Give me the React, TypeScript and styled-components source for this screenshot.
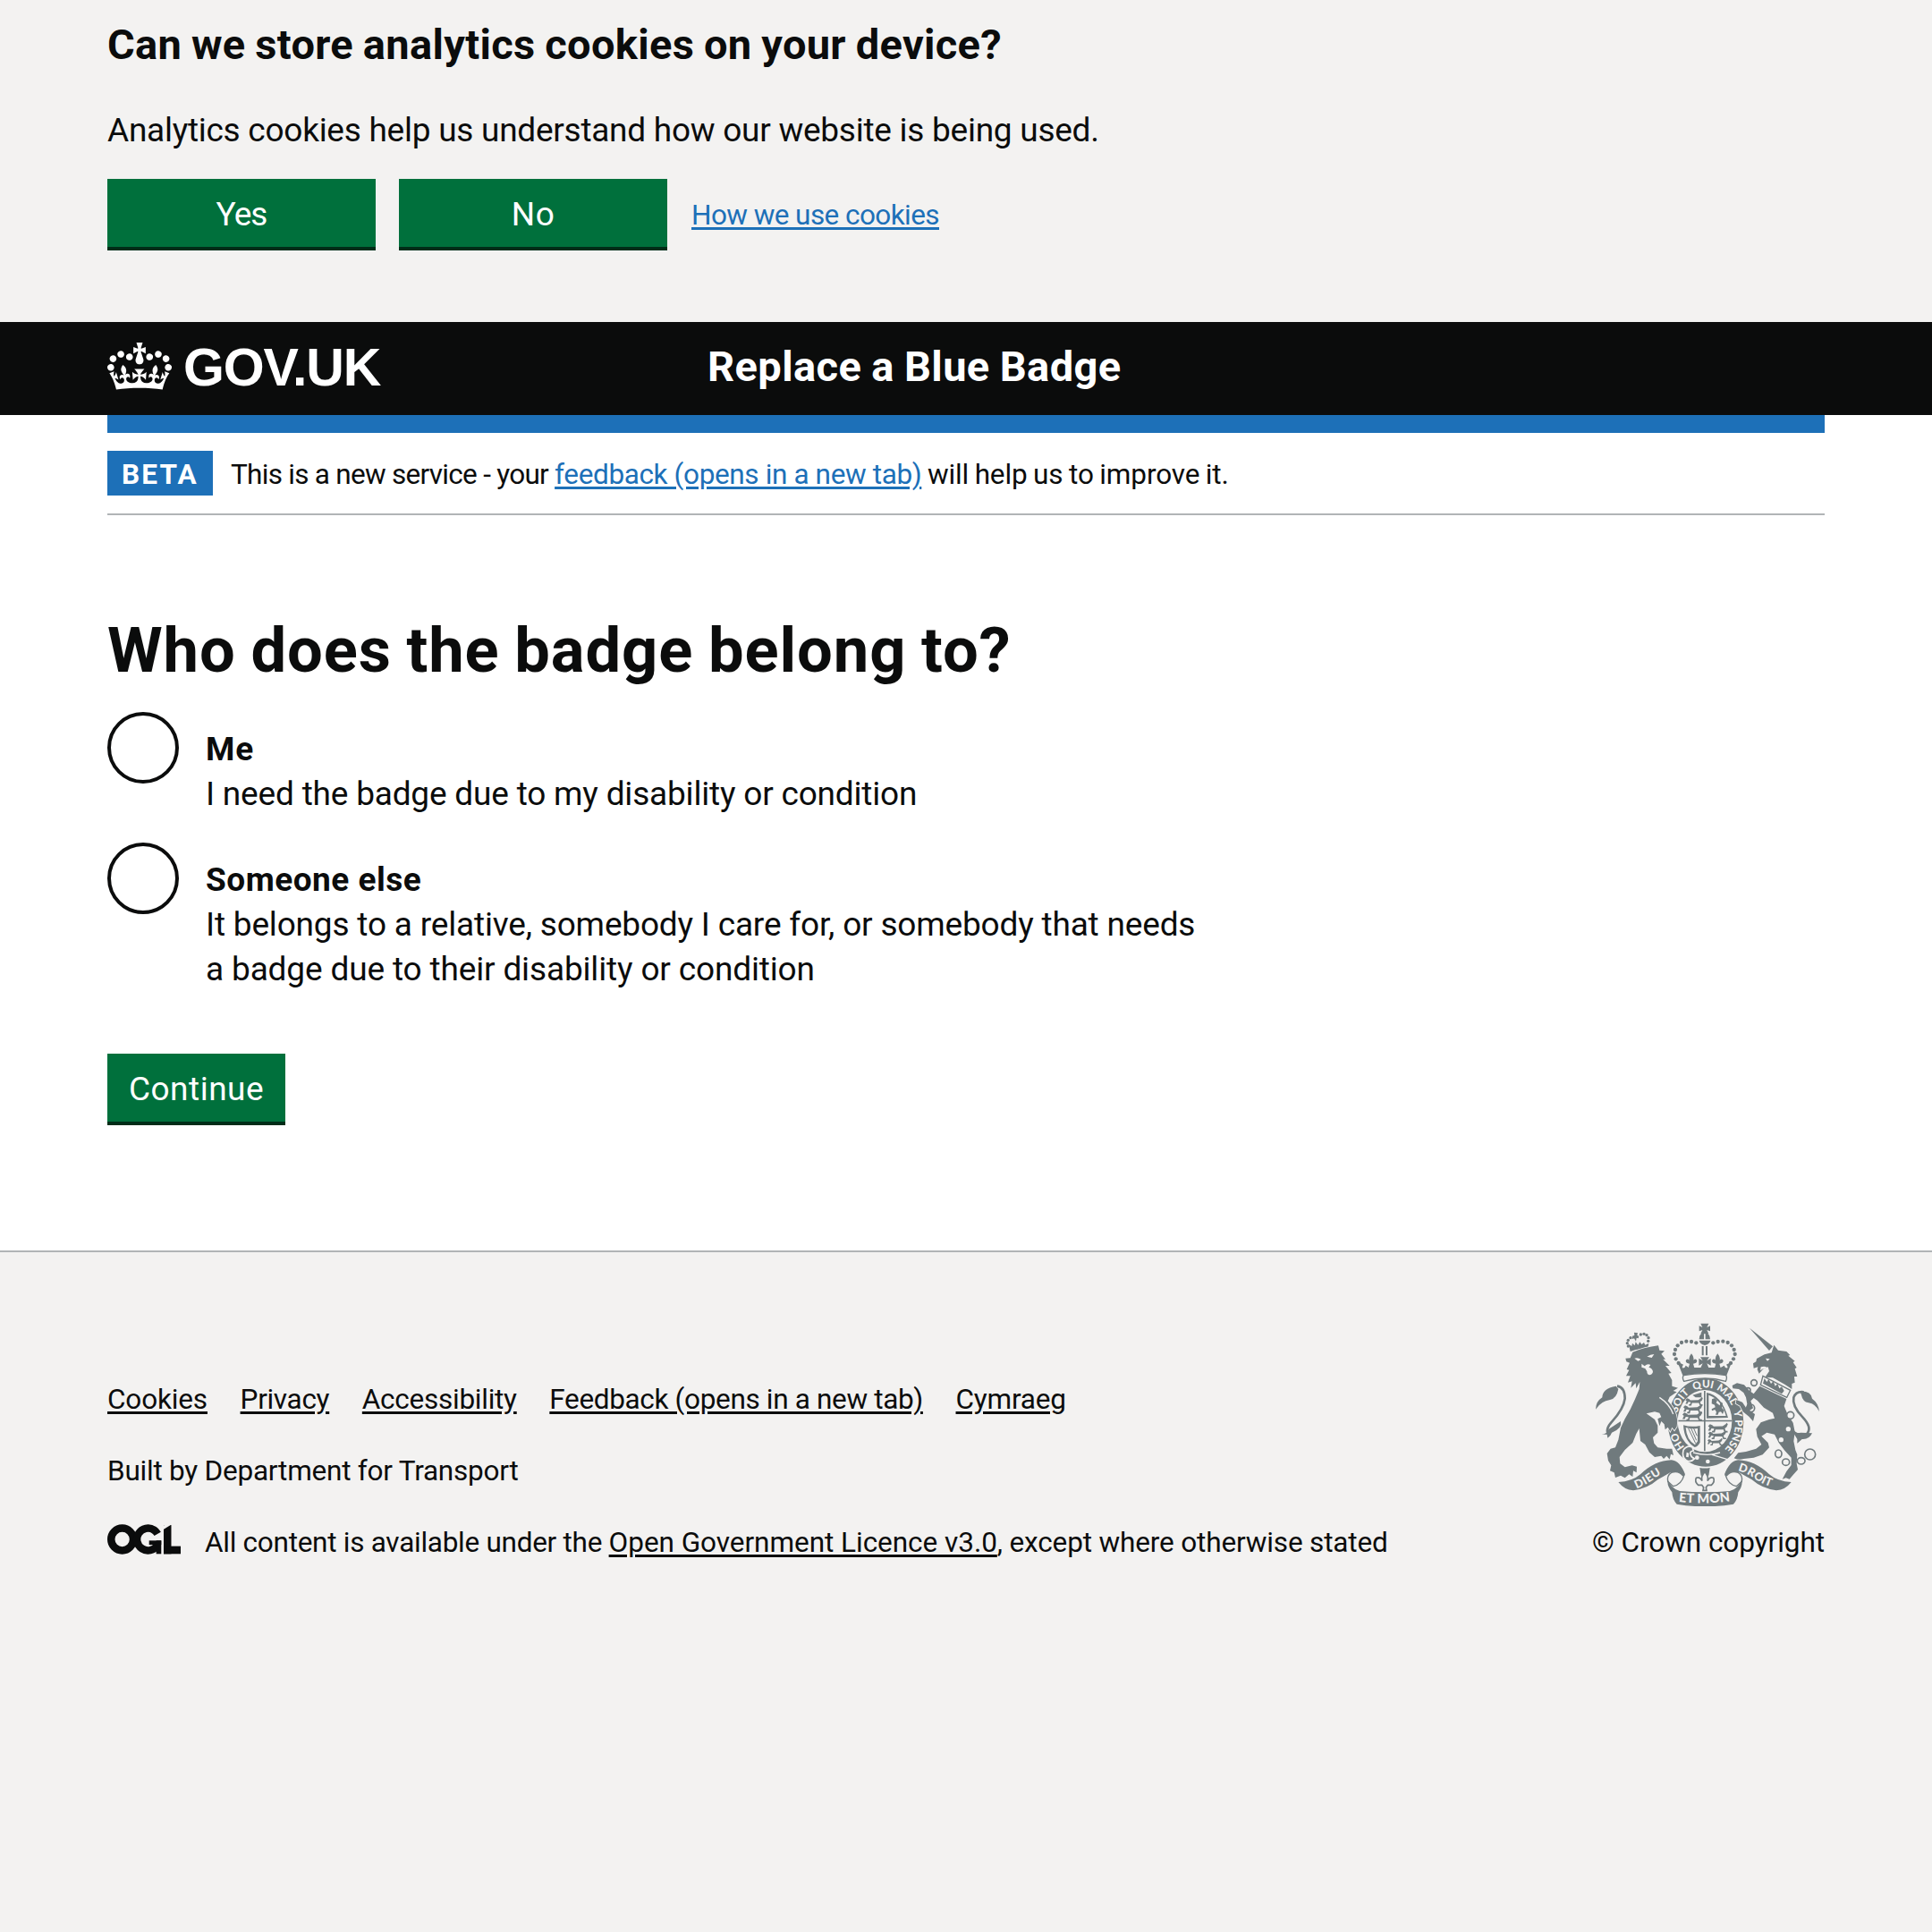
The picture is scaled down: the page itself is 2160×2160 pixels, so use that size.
import React from "react";
import styled, { createGlobalStyle } from "styled-components";

const ink = "#0b0c0c";
const blue = "#1d70b8";
const green = "#00703c";
const greenShadow = "#002d18";
const paleGrey = "#f3f2f1";
const ruleGrey = "#b1b4b6";
const crest = "#707a7d";

const GlobalStyle = createGlobalStyle`
  html { background: ${paleGrey}; }
  body {
    margin: 0;
    background: ${paleGrey};
    color: ${ink};
    font-family: Roboto, "Noto Sans", sans-serif;
    -webkit-font-smoothing: antialiased;
  }
`;

const Page = styled.div`
  display: flex;
  flex-direction: column;
  min-height: 2160px;
`;

const Container = styled.div`
  width: 1920px;
  margin: 0 auto;
`;

const Tracked = styled.span<{ $ls: number; $ws?: number }>`
  letter-spacing: ${(p) => p.$ls}px;
  word-spacing: ${(p) => p.$ws ?? 0}px;
  white-space: pre;
`;

/* Cookie banner */
const CookieBanner = styled.section`
  box-sizing: border-box;
  height: 360px;
  padding-top: 20px;
  background: ${paleGrey};
`;

const CookieHeading = styled.h2`
  margin: 0 0 41px;
  font-size: 47px;
  line-height: 60px;
  font-weight: 700;
  letter-spacing: 0.32px;
  word-spacing: -1.2px;
`;

const CookieText = styled.p`
  margin: 0 0 29px;
  font-size: 37px;
  line-height: 50px;
  letter-spacing: -0.26px;
`;

const ButtonRow = styled.div`
  display: flex;
  align-items: center;
`;

const Button = styled.button<{ $width: number; $ls: number }>`
  box-sizing: border-box;
  display: block;
  width: ${(p) => p.$width}px;
  height: 76px;
  margin: 0 26px 4px 0;
  padding: 15px 0 11px;
  border: 0;
  background: ${green};
  box-shadow: 0 4px 0 ${greenShadow};
  color: #fff;
  font-family: inherit;
  font-size: 37px;
  line-height: 50px;
  letter-spacing: ${(p) => p.$ls}px;
  text-align: center;
`;

const Link = styled.a<{ $ls: number; $dark?: boolean }>`
  color: ${(p) => (p.$dark ? ink : blue)};
  font-size: 31.5px;
  letter-spacing: ${(p) => p.$ls}px;
  white-space: pre;
  text-decoration: underline;
  text-decoration-thickness: 3px;
  text-underline-offset: 3px;
`;

const CookieLink = styled(Link)`
  margin-left: 1px;
  padding-top: 2px;
  line-height: 40px;
`;

/* Header */
const Header = styled.header`
  background: ${ink};
  color: #fff;
`;

const HeaderInner = styled(Container)`
  display: flex;
  align-items: flex-start;
  height: 104px;
`;

const Logo = styled.a`
  display: flex;
  align-items: flex-start;
  width: 671px;
  color: #fff;
`;

const Crown = styled.svg`
  width: 72px;
  height: 53px;
  margin: 23px 13px 0 0;
  fill: #fff;
`;

const LogoText = styled.span`
  padding-top: 21px;
  font-family: "Liberation Sans", Arial, sans-serif;
  font-size: 59px;
  line-height: 60px;
  font-weight: 700;
  letter-spacing: -1.2px;
`;

const ServiceName = styled.span`
  padding-top: 25px;
  font-size: 47px;
  line-height: 50px;
  font-weight: 700;
  letter-spacing: 0.4px;
  word-spacing: -1px;
`;

/* Phase banner and question */
const Content = styled.div`
  box-sizing: border-box;
  height: 934px;
  background: #fff;
`;

const BlueBar = styled.div`
  height: 20px;
  background: ${blue};
`;

const PhaseBanner = styled.div`
  display: flex;
  align-items: flex-start;
  height: 50px;
  padding: 20px 0;
  border-bottom: 2px solid ${ruleGrey};
`;

const PhaseTag = styled.strong`
  box-sizing: border-box;
  width: 118px;
  height: 50px;
  margin-right: 20px;
  padding: 2px 0 0 16px;
  background: ${blue};
  color: #fff;
  font-size: 31.5px;
  line-height: 49px;
  letter-spacing: 2.2px;
`;

const PhaseText = styled.span`
  padding-top: 2px;
  font-size: 31.5px;
  line-height: 49px;
`;

const Question = styled.h1`
  margin: 113px 0 31px;
  font-size: 70.5px;
  line-height: 76px;
  font-weight: 700;
  letter-spacing: 0.9px;
  word-spacing: -1.7px;
`;

const Radios = styled.div`
  display: flex;
  flex-direction: column;
  gap: 29px;
  margin-bottom: 69px;
`;

const RadioItem = styled.label`
  display: flex;
  align-items: flex-start;
`;

const RadioCircle = styled.span`
  box-sizing: border-box;
  width: 80px;
  height: 80px;
  margin-right: 30px;
  border: 4px solid ${ink};
  border-radius: 50%;
  background: #fff;
`;

const RadioText = styled.span`
  display: flex;
  flex-direction: column;
  padding-top: 17px;
  font-size: 37px;
  line-height: 50px;
`;

const RadioTitle = styled.strong<{ $ls: number }>`
  letter-spacing: ${(p) => p.$ls}px;
`;

/* Footer */
const Footer = styled.footer`
  flex: 1;
  border-top: 2px solid ${ruleGrey};
  background: ${paleGrey};
`;

const FooterInner = styled(Container)`
  display: flex;
  justify-content: space-between;
  padding-top: 79px;
`;

const FooterMain = styled.div`
  display: flex;
  flex-direction: column;
  gap: 30px;
  padding-top: 61px;
  font-size: 31.5px;
  line-height: 50px;
`;

const FooterLinks = styled.nav`
  display: flex;
  gap: 36.6px;
`;

const LicenceRow = styled.div`
  display: flex;
  align-items: flex-start;
`;

const OglMark = styled.svg`
  width: 82px;
  height: 34px;
  margin: 4px 27px 0 0;
`;

const FooterSide = styled.div`
  width: 260px;
  font-size: 31.5px;
  line-height: 50px;
  white-space: nowrap;
`;

const Arms = styled.svg`
  display: block;
  width: 260px;
  height: 205px;
  margin-bottom: 16px;
`;

function OglLogo() {
  return (
    <OglMark viewBox="0 0 483 196" aria-hidden="true">
      <g fill="none" stroke={ink} strokeWidth="50">
        <circle cx="98" cy="98" r="73" />
        <circle cx="268" cy="98" r="73" strokeDasharray="376 83" transform="rotate(33 268 98)" />
      </g>
      <g fill={ink}>
        <rect x="275" y="106" width="80" height="28" />
        <rect x="322" y="106" width="33" height="88" />
        <rect x="371" y="4" width="50" height="190" />
        <rect x="371" y="143" width="112" height="51" />
      </g>
      <line x1="361" y1="26" x2="421" y2="-12" stroke={paleGrey} strokeWidth="22" />
    </OglMark>
  );
}

const crownBeads = [
  [379, 95], [363, 91], [346, 90], [330, 94], [317, 104], [309, 118], [306, 133], [311, 149], [320, 163],
];

const coronetBeads = [
  [151, 106], [148, 96], [151, 86], [159, 78], [193, 67], [204, 65], [213, 69], [219, 78], [218, 89],
];

const chainRings: [number, number, number, number][] = [
  [573, 229, 10, 10], [553, 254, 8, 8], [562, 314, 13, 13], [695, 338, 12, 12],
  [655, 467, 11, 13], [680, 495, 12, 11], [731, 491, 13, 11], [761, 469, 18, 18],
];

const motto: [string, string][] = [
  ["HO", "16%"], ["SOIT", "35.6%"], ["QUI", "48.8%"], ["MAL", "60.8%"], ["Y", "71%"], ["PENSE", "81.6%"],
];

function Lioncel({ x, y, s = 1 }: { x: number; y: number; s?: number }) {
  return (
    <path
      transform={`translate(${x} ${y}) scale(${s})`}
      d="M0 5l5-5 6 2 4 4 24-1 8-5 3-4 3 4-3 7-5 4 2 7h5l1 4h-9l-3-8H20l-2 8h-8l1-4 4-1 1-5-7-1-3 6H0l4-8z"
    />
  );
}

function RoyalArms() {
  return (
    <Arms viewBox="30 28 780 615" fill={crest} aria-hidden="true">
      <defs>
        <path id="garter" d="M411 479A99 117 0 0 1 411 245A99 117 0 0 1 411 479" />
        <path id="scrollLeft" d="M179 584Q222 566 248 544Q268 531 300 521" />
        <path id="scrollMid" d="M320 628Q408 638 502 625" />
        <path id="scrollRight" d="M519 524Q552 532 578 552Q604 572 652 584" />
      </defs>

      {/* imperial crown */}
      <path d="M394 30h27l-6 13 11-5v18l-11-4 6 13h-27l6-13-11 4V38l11 5z" />
      <path d="M389 83q0-20 16-22v22zM410 61q15 2 16 22h-16zM389 87h38q-2 12-19 16-17-4-19-16z" />
      {crownBeads.map(([x, y]) => (
        <g key={x}>
          <circle cx={x} cy={y} r="6.4" />
          <circle cx={815 - x} cy={y} r="6.4" />
        </g>
      ))}
      <path d="M398 106h6v31h-6zm13 0h6v31h-6z" />
      <path d="M393 143h30l-8 12 13-8v24l-13-7 6 15h-27l7-15-13 7v-24l13 8z" />
      <path d="M363 131q10 12 7 22 8-8 12 2-1 10-13 10l4 14h-20l4-14q-12 0-13-10 4-10 12-2-3-10 7-22zm88 0q10 12 7 22 8-8 12 2-1 10-13 10l4 14h-20l4-14q-12 0-13-10 4-10 12-2-3-10 7-22z" />
      <path d="M316 158l20 10q-5 6-3 11 8 2 11-8l10 7h107l12-7q3 10 11 8 2-5-4-11l19-10-18 46q-74-13-147 0z" />
      <path d="M337 204q71-12 142 0 5 8-1 20-69-20-140 0-7-12-1-20z" fill={paleGrey} stroke={crest} strokeWidth="4" />

      {/* garter and quartered shield */}
      <ellipse cx="411" cy="362" rx="127" ry="148" />
      <ellipse cx="408" cy="357" rx="91" ry="104" fill={paleGrey} />
      <g>
        <path d="M405 256h5v202h-5zM319 354h180v5H319z" />
        <Lioncel x={343} y={281} s={1.1} />
        <Lioncel x={336} y={305} s={1.2} />
        <Lioncel x={333} y={329} s={1.25} />
        <Lioncel x={419} y={368} s={1.25} />
        <Lioncel x={419} y={393} s={1.15} />
        <Lioncel x={417} y={418} s={0.95} />
        <path d="M367 270l30-9v17h-20z" />
        <path d="M414 262q50 8 72 84l-72 2zM421 270v70h58q-15-55-58-70z" fillRule="evenodd" />
        <path d="M432 284l10-4 8 8-4 8 12 9 3-12 7 4-3 16 8 8-5 13-6-8-7 1-3 9h-8l3-9-5-8-10 4-1-6 12-6-2-8-10-4z" />
        <path d="M336 371q25 8 56 2v56q-8 14-18 16-35-20-38-74zm8 8q3 42 31 58l9-12v-43q-22 3-40-3z" fillRule="evenodd" />
        <path d="M353 382l24 50M362 382l18 40M371 382l11 25" fill="none" stroke={crest} strokeWidth="3" />
      </g>
      <g fill={paleGrey} fontFamily="Lato, sans-serif" fontSize="35" fontWeight="900" textAnchor="middle">
        {motto.map(([word, offset]) => (
          <text key={word}>
            <textPath href="#garter" startOffset={offset}>{word}</textPath>
          </text>
        ))}
      </g>
      <path d="M336 455q12-18 30-10l4 12q-14 2-10 12 2 10 14 14-12 14-28 6-16-10-10-34z" stroke={paleGrey} strokeWidth="5" />
      <path d="M347 462l8 3-2 14-8-2z" fill={paleGrey} />
      <circle cx="382" cy="480" r="7" fill={paleGrey} />
      <circle cx="418" cy="493" r="7" fill={paleGrey} />
      <path d="M369 463q50 14 90 0M432 470l52 16" fill="none" stroke={paleGrey} strokeWidth="4" />

      {/* lion supporter */}
      <g>
        <path d="M158 124l-5-24 10 6 2-10 8 8 3-12 8 10 6-10 6 8 8-6 4 8 12-6-4 22q-30-6-58 6z" />
        <path d="M171 60l12 2-2 8 6 2-2 8-6-2-2 12-6-10-6 2v-10l7-2z" />
        {coronetBeads.map(([x, y]) => (
          <circle key={`${x}-${y}`} cx={x} cy={y} r="5" />
        ))}
        <path
          d="M142 147L158 146L166 126Q206 110 252 104L256 120L273 122L262 132L276 150L268 150L290 172L276 172L296 196L286 198L298 220L298 240L318 246L302 256L314 260L290 276L284 290Q312 318 316 356L314 376L306 388L298 378L292 392L284 378L275 386L272 368L262 358L256 374L250 350L262 344L256 330L240 326L212 332L240 352L250 372L250 396L234 412L238 432L250 446L280 450L298 450L303 472L294 468L290 486L280 474L270 484L262 474L240 478L222 462L208 436L192 424L188 382L178 400L166 430L140 454L122 478L124 500L140 512L164 506L180 510L179 530L168 524L166 544L154 536L140 548L126 540L108 547L104 530L90 524L94 506L84 490L80 466L92 450L108 446L118 420L126 380L140 350L158 318L174 284L188 250L190 226L178 248L176 230L160 246L164 224L150 228L158 206L144 206L154 186L146 184L156 162L145 158Z"
          stroke={paleGrey}
          strokeWidth="5"
          paintOrder="stroke"
        />
        <path d="M172 147q12-4 22 4l-10 5zM214 141q12-8 24-8l-8 12zM196 165l10 8q10-10 20-4l-6 8q14 4 14 16-4 10-12 10-8-2-8-12l-6-10-12-4z" fill={paleGrey} />
        <path d="M256 278q34 22 46 56" fill="none" stroke={paleGrey} strokeWidth="4" />
        <path d="M86 402q-14-16 10-42 40-44 44-78 0-38-26-42" fill="none" stroke={crest} strokeWidth="8" />
        <path d="M42 318q0-26 22-40 0-30 46-38l8 10q-6 32-28 36-30 4-48 32z" />
        <path d="M62 402q18-2 24-18l40-26q6 24-30 38-4 12-14 18l-2-12z" />
      </g>

      {/* unicorn supporter */}
      <g>
        <path d="M558 45l78 62-12 14z" />
        <path d="M640 102l14 18 28 4 12 12-6 2 22 18-6 4 12 18-6 4 8 26-10 0 2 20-10 4 0 18-24-16-40-22-26-2 14-20-4-14-14 4-16 18-6-14 2-8-14 4-2-16 10-6 2-10 26-14 24-6z" />
        <path d="M612 147l14 2-8 7zM596 176q14-4 20 2-14 2-22 10z" fill={paleGrey} />
        <path
          d="M592 240L682 283L674 307L684 331L704 363L710 393L706 425L712 455L718 470L716 500L720 520L704 538L692 552L680 548L668 552L682 526L698 505L698 480L676 456L656 430L642 402L616 396L598 408L620 430L624 446L602 470L572 480L538 484L522 488L506 482L520 464L546 460L580 450L598 436L584 410L580 384L596 362L624 352L642 348L636 330L606 312L584 288L572 280L562 290L570 314L558 322L576 334L570 358L556 342L536 326L526 306L512 298L514 286L534 294L546 312L550 300L546 278L538 262L522 250L502 248L500 238L516 230L540 236L558 256L572 266Z"
          stroke={paleGrey}
          strokeWidth="5"
          paintOrder="stroke"
        />
        <path d="M603 206l92 48-12 24-88-42z" fill={paleGrey} stroke={crest} strokeWidth="4" />
        <path d="M603 231l5-17 8 12 6-10 8 16 8-8 6 16 8-8 6 16 8-6 8 14-8 10z" />
        <circle cx="688" cy="384" r="8" fill={paleGrey} />
        <circle cx="664" cy="420" r="8" fill={paleGrey} />
        <circle cx="695" cy="338" r="12" fill={paleGrey} />
        <path d="M704 392q30 26 48 6 16-20-16-54-36-36-30-66 8-22 34-18" fill="none" stroke={crest} strokeWidth="8" />
        <path d="M792 326q-2-28-24-44-4-26-40-24l4 12q4 22 24 26 24 4 36 30z" />
        <path d="M702 392q14 8 28 4l38 2q-10 22-34 20l-16 14v-14z" />
        <g fill="none" stroke={crest} strokeWidth="5">
          {chainRings.map(([cx, cy, rx, ry]) => (
            <ellipse key={cx} cx={cx} cy={cy} rx={rx} ry={ry} />
          ))}
        </g>
      </g>

      {/* motto scroll */}
      <g stroke={paleGrey} strokeWidth="5" paintOrder="stroke">
        <path d="M118 562q46-2 74-26 48-46 104-48 28 2 46 48l-6 10q-20-22-44-16-20 12-42 24-34 30-82 36-30-2-50-28z" />
        <path d="M698 562q-46-2-74-26-48-46-104-48-28 2-46 48l6 10q20-22 44-16 20 12 42 24 34 30 82 36 30-2 50-28z" />
      </g>
      <g fill={paleGrey} stroke={crest} strokeWidth="4">
        <path d="M334 540q-14-18-38-10-16 10-12 30l18 16q28-6 36-36z" />
        <path d="M482 540q14-18 38-10 16 10 12 30l-18 16q-28-6-36-36z" />
      </g>
      <path d="M284 554q10 30 40 38 84 8 168 0 30-8 40-38 4 20-12 42-2 26-16 40-96 16-190 0-14-14-16-40-18-22-14-42z" />
      <g fill={paleGrey} fontFamily="Lato, sans-serif" fontWeight="900">
        <text fontSize="38" letterSpacing="2"><textPath href="#scrollLeft">DIEU</textPath></text>
        <text fontSize="43" letterSpacing="1"><textPath href="#scrollMid">ET MON</textPath></text>
        <text fontSize="38" letterSpacing="1"><textPath href="#scrollRight">DROIT</textPath></text>
      </g>
      <path d="M391 514q17 3 34 0l-4 26h-26z" />
      <path d="M408 528q14 14 9 30 8-16 20-10 6 12-7 24h-12l-6 8 2 10h-12l2-10-6-8h-12q-13-12-7-24 12-6 20 10-5-16 9-30z" fill={paleGrey} stroke={crest} strokeWidth="5" />
    </Arms>
  );
}

export default function App() {
  return (
    <Page>
      <GlobalStyle />
      <CookieBanner>
        <Container>
          <CookieHeading>Can we store analytics cookies on your device?</CookieHeading>
          <CookieText>Analytics cookies help us understand how our website is being used.</CookieText>
          <ButtonRow>
            <Button $width={300} $ls={-1}>Yes</Button>
            <Button $width={300} $ls={0.4}>No</Button>
            <CookieLink $ls={-0.57}>How we use cookies</CookieLink>
          </ButtonRow>
        </Container>
      </CookieBanner>

      <Header>
        <HeaderInner>
          <Logo>
            <Crown viewBox="0 0 132 97" aria-hidden="true">
              <path d="M25 30.2c3.5 1.5 7.7-.2 9.1-3.7 1.5-3.6-.2-7.8-3.9-9.2-3.6-1.4-7.6.3-9.1 3.9-1.4 3.5.3 7.5 3.9 9zM9 39.5c3.6 1.5 7.8-.2 9.2-3.7 1.5-3.6-.2-7.8-3.9-9.1-3.6-1.5-7.6.2-9.1 3.8-1.4 3.5.3 7.5 3.8 9zM4.4 57.2c3.5 1.5 7.7-.2 9.1-3.8 1.5-3.6-.2-7.7-3.9-9.1-3.5-1.5-7.6.3-9.1 3.8-1.4 3.5.3 7.6 3.9 9.1zm38.3-21.4c3.5 1.5 7.7-.2 9.1-3.8 1.5-3.6-.2-7.7-3.9-9.1-3.6-1.5-7.6.3-9.1 3.8-1.3 3.6.4 7.7 3.9 9.1zm64.4-5.6c-3.6 1.5-7.8-.2-9.1-3.7-1.5-3.6.2-7.8 3.8-9.2 3.6-1.4 7.7.3 9.2 3.9 1.3 3.5-.4 7.5-3.9 9zm15.9 9.3c-3.6 1.5-7.7-.2-9.1-3.7-1.5-3.6.2-7.8 3.7-9.1 3.6-1.5 7.7.2 9.2 3.8 1.5 3.5-.3 7.5-3.8 9zm4.7 17.7c-3.6 1.5-7.8-.2-9.2-3.8-1.5-3.6.2-7.7 3.9-9.1 3.6-1.5 7.7.3 9.2 3.8 1.3 3.5-.4 7.6-3.9 9.1zM89.3 35.8c-3.6 1.5-7.8-.2-9.2-3.8-1.4-3.6.2-7.7 3.9-9.1 3.6-1.5 7.7.3 9.2 3.8 1.4 3.6-.3 7.7-3.9 9.1zM69.7 17.7l8.9 4.7V9.3l-8.9 2.8c-.2-.3-.5-.6-.9-.9L72.4 0H59.6l3.5 11.2c-.3.3-.6.5-.9.9l-8.8-2.8v13.1l8.8-4.7c.3.3.6.7.9.9l-5 15.4v.1c-.2.8-.4 1.6-.4 2.4 0 4.1 3.1 7.5 7 8.1h.2c.3 0 .7.1 1 .1.4 0 .7 0 1-.1h.2c4-.6 7.1-4.1 7.1-8.1 0-.8-.1-1.7-.4-2.4V34l-5.1-15.4c.4-.2.7-.6 1-.9zM66 92.8c16.9 0 32.8 1.1 47.1 3.2 4-16.9 8.9-26.7 14-33.5l-9.6-3.4c1 4.9 1.1 7.2 0 10.2-1.5-1.4-3-4.3-4.2-8.7L108.6 76c2.8-2 5-3.2 7.5-3.3-4.4 9.4-10 11.9-13.6 11.2-4.3-.8-6.3-4.6-5.6-7.9 1-4.7 5.7-5.9 8-.5 4.3-8.7-3-11.4-7.6-8.8 7.1-7.2 7.9-13.5 2.1-21.1-8 6.1-8.1 12.3-4.5 20.8-4.7-5.4-12.1-2.5-9.5 6.2 3.4-5.2 7.9-2 7.2 3.1-.6 4.3-6.4 7.8-13.5 7.2-10.3-.9-10.9-8-11.2-13.8 2.5-.5 7.1 1.8 11 7.3L80.2 60c-4.1 4.4-8 5.3-12.3 5.4 1.4-4.4 8-11.6 8-11.6H55.5s6.4 7.2 7.9 11.6c-4.2-.1-8-1-12.3-5.4l1.4 16.4c3.9-5.5 8.5-7.7 10.9-7.3-.3 5.8-.9 12.8-11.1 13.8-7.2.6-12.9-2.9-13.5-7.2-.7-5 3.8-8.3 7.1-3.1 2.7-8.7-4.6-11.6-9.4-6.2 3.7-8.5 3.6-14.7-4.6-20.8-5.8 7.6-5 13.9 2.2 21.1-4.7-2.6-11.9.1-7.7 8.8 2.3-5.5 7.1-4.2 8.1.5.7 3.3-1.3 7.1-5.7 7.9-3.5.7-9-1.8-13.5-11.2 2.5.1 4.7 1.3 7.5 3.3l-4.7-15.4c-1.2 4.4-2.7 7.2-4.3 8.7-1.1-3-.9-5.3 0-10.2l-9.5 3.4c5 6.9 9.9 16.7 14 33.5 14.8-2.1 30.8-3.2 47.7-3.2z" />
            </Crown>
            <LogoText>GOV.UK</LogoText>
          </Logo>
          <ServiceName>Replace a Blue Badge</ServiceName>
        </HeaderInner>
      </Header>

      <Content>
        <Container>
          <BlueBar />
          <PhaseBanner>
            <PhaseTag>BETA</PhaseTag>
            <PhaseText>
              <Tracked $ls={-0.72}>{"This is a new service - your "}</Tracked>
              <Link $ls={-0.37}>feedback (opens in a new tab)</Link>
              <Tracked $ls={-0.13} $ws={-1.1}>{" will help us to improve it."}</Tracked>
            </PhaseText>
          </PhaseBanner>
          <Question>Who does the badge belong to?</Question>
          <Radios>
            <RadioItem>
              <RadioCircle />
              <RadioText>
                <RadioTitle $ls={0.8}>Me</RadioTitle>
                <Tracked $ls={-0.19}>I need the badge due to my disability or condition</Tracked>
              </RadioText>
            </RadioItem>
            <RadioItem>
              <RadioCircle />
              <RadioText>
                <RadioTitle $ls={0.5}>Someone else</RadioTitle>
                <Tracked $ls={-0.18}>It belongs to a relative, somebody I care for, or somebody that needs</Tracked>
                <Tracked $ls={-0.15}>a badge due to their disability or condition</Tracked>
              </RadioText>
            </RadioItem>
          </Radios>
          <Button $width={199} $ls={0.5}>Continue</Button>
        </Container>
      </Content>

      <Footer>
        <FooterInner>
          <FooterMain>
            <FooterLinks>
              <Link $dark $ls={-0.15}>Cookies</Link>
              <Link $dark $ls={-0.3}>Privacy</Link>
              <Link $dark $ls={-0.26}>Accessibility</Link>
              <Link $dark $ls={-0.34}>Feedback (opens in a new tab)</Link>
              <Link $dark $ls={-0.2}>Cymraeg</Link>
            </FooterLinks>
            <Tracked $ls={-0.23}>Built by Department for Transport</Tracked>
            <LicenceRow>
              <OglLogo />
              <span>
                <Tracked $ls={-0.27}>{"All content is available under the "}</Tracked>
                <Link $dark $ls={-0.04}>Open Government Licence v3.0</Link>
                <Tracked $ls={-0.15}>, except where otherwise stated</Tracked>
              </span>
            </LicenceRow>
          </FooterMain>
          <FooterSide>
            <RoyalArms />
            <Tracked $ls={-0.05}>© Crown copyright</Tracked>
          </FooterSide>
        </FooterInner>
      </Footer>
    </Page>
  );
}
